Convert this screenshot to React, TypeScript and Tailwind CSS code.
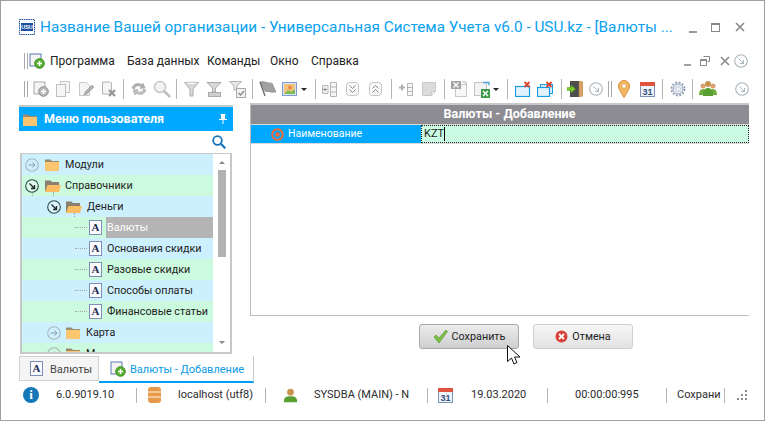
import React from 'react';

const gray = '#a9a9a9';

const Sep = ({ className = 'ml-2' }: { className?: string }) => (
  <div className={`h-[20px] w-px shrink-0 bg-[#b5b5b5] ${className}`} />
);

const Grip = () => (
  <div className="flex shrink-0 gap-[2px]">
    <div className="h-[16px] w-px bg-[#a8a8a8]" />
    <div className="h-[16px] w-px bg-[#a8a8a8]" />
  </div>
);

const NewDocIcon = ({ size = 16, muted = true }: { size?: number; muted?: boolean }) => (
  <svg width={size} height={size} viewBox="0 0 16 16" className="shrink-0">
    <rect x="1" y="1" width="11" height="12" fill="#f4f4f4" stroke={muted ? gray : '#5b78b8'} />
    <circle cx="10.5" cy="10.5" r="4.8" fill={muted ? '#b9b9b9' : '#58b030'} stroke={muted ? '#8d8d8d' : '#3a8a1c'} />
    <path d="M10.5 8v5M8 10.5h5" stroke="#fff" strokeWidth="1.5" />
  </svg>
);

const CopyIcon = () => (
  <svg width="14" height="16" viewBox="0 0 14 16" className="shrink-0">
    <rect x="4.5" y="0.5" width="9" height="11" fill="#f5f5f5" stroke="#c8c8c8" />
    <rect x="0.5" y="3.5" width="9" height="12" fill="#f5f5f5" stroke="#c0c0c0" />
  </svg>
);

const EditIcon = () => (
  <svg width="15" height="16" viewBox="0 0 15 16" className="shrink-0">
    <path d="M.5 1.5h7l3 3v10H.5z" fill="#f5f5f5" stroke="#c8c8c8" />
    <path d="M5 14l1-3 7-7 2 2-7 7z" fill="#b0b0b0" stroke="#9a9a9a" strokeWidth=".6" />
  </svg>
);

const DeleteDocIcon = () => (
  <svg width="14" height="16" viewBox="0 0 14 16" className="shrink-0">
    <path d="M.5 1h8l1 1v11H.5z" fill="#f5f5f5" stroke="#b4b4b4" />
    <path d="M7 9l6 6M13 9l-6 6" stroke="#959595" strokeWidth="2.2" />
  </svg>
);

const RefreshIcon = () => (
  <svg width="16" height="16" viewBox="0 0 16 16" className="shrink-0">
    <path d="M1 7c1-4 6-6 10-3l1-2 2 5-5 .5 1-2C7 4 4 5 3.500 8z" fill="#b0b0b0" stroke="#969696" strokeWidth=".5" />
    <path d="M15 9c-1 4-6 6-10 3l-1 2-2-5 5-.5-1 2c3 1.500 6 .5 6.500-2.500z" fill="#c0c0c0" stroke="#969696" strokeWidth=".5" />
  </svg>
);

const ZoomIcon = () => (
  <svg width="18" height="18" viewBox="0 0 18 18" className="shrink-0">
    <circle cx="7" cy="7" r="5.500" fill="#f2f2f2" stroke="#c8c8c8" strokeWidth="1.500" />
    <path d="M11 11l6 6" stroke="#bdbdbd" strokeWidth="2.500" />
  </svg>
);

const FunnelIcon = () => (
  <svg width="15" height="16" viewBox="0 0 15 16" className="shrink-0">
    <path d="M.5 1.500h14L9 8v7H6V8z" fill="#dadada" stroke="#aaa" />
    <ellipse cx="7.500" cy="2.500" rx="6" ry="1.500" fill="#f5f5f5" stroke="#b8b8b8" strokeWidth=".6" />
  </svg>
);

const FunnelBarIcon = () => (
  <svg width="16" height="17" viewBox="0 0 16 17" className="shrink-0">
    <path d="M1 1.500h14L9.500 7v4h-3V7z" fill="#d8d8d8" stroke="#aaa" />
    <rect x="2.500" y="11.500" width="12" height="4" fill="#cfcfcf" stroke="#aaa" />
  </svg>
);

const FunnelCheckIcon = () => (
  <svg width="17" height="18" viewBox="0 0 17 18" className="shrink-0">
    <path d="M.5 1.500h12L8 6v4H5V6z" fill="#e6e6e6" stroke="#b4b4b4" />
    <rect x="7.500" y="8.500" width="9" height="9" fill="#f3f3f3" stroke="#aaa" />
    <path d="M9.500 13l2 2 3.500-4" fill="none" stroke="#8c8c8c" strokeWidth="1.500" />
  </svg>
);

const FlagIcon = () => (
  <svg width="18" height="16" viewBox="0 0 18 16" className="shrink-0">
    <path d="M1 1c4-1.500 8 2 12 1l4 9c-4 1-7-1-11-.5z" fill="#a0a0a0" stroke="#888" strokeWidth=".6" />
    <path d="M1 1l5 14" stroke="#666" strokeWidth="1.300" />
  </svg>
);

const PictureIcon = () => (
  <svg width="15" height="14" viewBox="0 0 15 14" className="shrink-0">
    <rect x=".5" y=".5" width="14" height="13" fill="#dbe7f6" stroke="#7d9bd0" />
    <rect x="2" y="2" width="11" height="10" fill="#f0c27a" />
    <path d="M2 12l4-4 3 2 4-3v5z" fill="#7cbc55" />
    <circle cx="8" cy="5.500" r="2" fill="#e88c4a" />
  </svg>
);

const Caret = ({ className = 'ml-1' }: { className?: string }) => (
  <div className={`h-0 w-0 shrink-0 border-x-[3px] border-t-[3px] border-x-transparent border-t-[#222] ${className}`} />
);

const SplitIcon = () => (
  <svg width="15" height="15" viewBox="0 0 15 15" className="shrink-0">
    <path d="M8.500.5h6v14h-6zM8.500 5h6M8.500 10h6" fill="#f6f6f6" stroke="#b4b4b4" />
    <path d="M.5 3.500h5.500v8H.5z" fill="#f6f6f6" stroke="#b4b4b4" />
    <path d="M3 5.500v4M1 7.500h4" stroke="#8e8e8e" />
  </svg>
);

const ChevronsIcon = ({ up = false }: { up?: boolean }) => (
  <svg width="13" height="14" viewBox="0 0 13 14" className="shrink-0">
    <rect x=".5" y=".5" width="12" height="13" rx="3" fill="#f9f9f9" stroke="#c4c4c4" />
    <path d={up ? 'M3.500 6.500L6.500 3.500l3 3M3.500 10.500l3-3 3 3' : 'M3.500 3.500l3 3 3-3M3.500 7.500l3 3 3-3'} fill="none" stroke="#858585" />
  </svg>
);

const AddRowIcon = () => (
  <svg width="15" height="15" viewBox="0 0 15 15" className="shrink-0">
    <path d="M9.500 1.500h5v12h-5zM9.500 5.500h5M9.500 9.500h5" fill="#f6f6f6" stroke="#b4b4b4" />
    <path d="M4 2.500v6M1 5.500h6" stroke="#b0b0b0" strokeWidth="2" />
  </svg>
);

const NoteIcon = () => (
  <svg width="14" height="14" viewBox="0 0 14 14" className="shrink-0">
    <path d="M.5.500h13v9l-4 4h-9z" fill="#dcdcdc" stroke="#c8c8c8" />
    <path d="M9.500 13.500v-4h4z" fill="#f4f4f4" stroke="#c8c8c8" />
  </svg>
);

const XlsOutIcon = () => (
  <svg width="16" height="16" viewBox="0 0 16 16" className="shrink-0">
    <rect x="4.500" y="3.500" width="11" height="12" fill="#f7f7f7" stroke="#c8c8c8" />
    <rect x="0" y="0" width="10" height="8" fill="#a4a4a4" />
    <path d="M2.500 1.500l5 5M7.500 1.500l-5 5" stroke="#fff" strokeWidth="1.300" />
    <path d="M11 1h4v3" fill="none" stroke="#b4b4b4" />
  </svg>
);

const XlsInIcon = () => (
  <svg width="17" height="17" viewBox="0 0 17 17" className="shrink-0">
    <rect x=".5" y="1.500" width="12" height="13" fill="#f3f3f3" stroke="#c4c4c4" />
    <path d="M9 1.500h6v3" fill="none" stroke="#4aa2d8" strokeWidth="1.300" />
    <rect x="7" y="8" width="9" height="9" fill="#3f9a4a" />
    <path d="M9 10l5 5M14 10l-5 5" stroke="#fff" strokeWidth="1.400" />
  </svg>
);

const WinCloseIcon = ({ double = false }: { double?: boolean }) => (
  <svg width="16" height="16" viewBox="0 0 16 16" className="shrink-0">
    {double && <rect x="3.500" y="3.500" width="12" height="9" fill="#d6eefb" stroke="#169be0" />}
    <rect x=".5" y={double ? 6.500 : 5.500} width={double ? 12 : 14} height={double ? 9 : 10} fill="#e2f3fd" stroke="#169be0" strokeWidth="1.200" />
    <path d="M9.500 1l5 5M14.500 1l-5 5" stroke="#e0432e" strokeWidth="1.800" />
  </svg>
);

const DoorIcon = () => (
  <svg width="16" height="16" viewBox="0 0 16 16" className="shrink-0">
    <rect x="3" y="0" width="9" height="16" fill="#4c4c4c" />
    <path d="M12 0l4 1v14l-4 1z" fill="#d7a468" stroke="#b67f44" strokeWidth=".5" />
    <path d="M0 6.500h4V4l4.500 4L4 12V9.500H0z" fill="#7ccb2e" stroke="#4e9a16" strokeWidth=".5" />
  </svg>
);

const CircleArrow = ({ size = 14, dark = false, right = false }: { size?: number; dark?: boolean; right?: boolean }) => (
  <svg width={size} height={size} viewBox="0 0 14 14" className="shrink-0">
    <circle cx="7" cy="7" r="6.300" fill={dark ? '#fff' : 'none'} fillOpacity={dark ? 0.35 : 0} stroke={dark ? '#2a4a48' : '#a9b4bb'} strokeWidth="1.100" />
    {right ? (
      <path d="M3.500 7h6.500M7.500 4.500L10 7l-2.500 2.500" fill="none" stroke="#8b9aa6" strokeWidth="1" />
    ) : (
      <path d="M4.500 4.500l5 5M9.500 6v3.500H6" fill="none" stroke={dark ? '#1c2c2c' : '#a9b4bb'} strokeWidth={dark ? 1.400 : 1} />
    )}
  </svg>
);

const PinIcon = () => (
  <svg width="12" height="18" viewBox="0 0 12 18" className="shrink-0">
    <path d="M6 17.500C3 12 .5 9.500.5 6a5.500 5.500 0 0 1 11 0c0 3.500-2.500 6-5.500 11.500z" fill="#f2b765" stroke="#d8903c" />
    <circle cx="6" cy="6" r="2.300" fill="#fff6e6" stroke="#d8903c" strokeWidth=".6" />
  </svg>
);

const CalendarIcon = () => (
  <svg width="15" height="15" viewBox="0 0 15 15" className="shrink-0">
    <rect x=".5" y=".5" width="14" height="14" fill="#eef3fa" stroke="#7e93b4" />
    <rect x="0" y="0" width="15" height="4" fill="#e0533f" />
    <text x="7.500" y="13" textAnchor="middle" fontSize="9" fontWeight="700" fontFamily="'Liberation Sans', sans-serif" fill="#33507f">31</text>
  </svg>
);

const GearIcon = () => (
  <svg width="16" height="16" viewBox="0 0 16 16" className="shrink-0">
    <circle cx="8" cy="8" r="2.500" fill="#fff" stroke="#8a9cb4" />
    <circle cx="8" cy="8" r="5" fill="#e4e9f0" fillOpacity=".6" stroke="#8a9cb4" />
    <circle cx="8" cy="8" r="6.600" fill="none" stroke="#8a9cb4" strokeWidth="1.700" strokeDasharray="2 1.500" />
  </svg>
);

const UsersIcon = ({ size = 18, single = false }: { size?: number; single?: boolean }) => (
  <svg width={size} height={size} viewBox="0 0 18 18" className="shrink-0">
    {!single && (
      <>
        <circle cx="4" cy="6" r="2.500" fill="#e0a070" />
        <path d="M0 15c0-4 1.500-6 4-6s4 2 4 6z" fill="#6cad3e" />
        <circle cx="14" cy="6" r="2.500" fill="#e0a070" />
        <path d="M10 15c0-4 1.500-6 4-6s4 2 4 6z" fill="#6cad3e" />
      </>
    )}
    <circle cx="9" cy={single ? 5 : 4} r={single ? 4 : 3} fill="#c99350" />
    <path d={single ? 'M1 17c0-6 3-7 8-7s8 1 8 7z' : 'M4 16c0-6 2-8 5-8s5 2 5 8z'} fill="#58a032" />
  </svg>
);

const FolderIcon = ({ open = false, className = '' }: { open?: boolean; className?: string }) => (
  <svg width="16" height="13" viewBox="0 0 16 13" className={`shrink-0 ${className}`}>
    <path d="M0 1.500h5.500L7 3h7v10H0z" fill={open ? '#8b8070' : '#9a8a70'} />
    {open ? <path d="M2.500 6H16l-2 7H0z" fill="#fbbd63" /> : <rect x="0" y="4" width="14" height="9" fill="#fcc56f" />}
  </svg>
);

const LetterIcon = () => (
  <div className="flex h-[15px] w-[13px] shrink-0 items-center justify-center border border-[#7d8fb8] bg-[#fbfbff] font-['Liberation_Serif',serif] text-[11px] leading-none font-bold text-[#1d2a50]">
    A
  </div>
);

const Guide = ({ end = false }: { end?: boolean }) => (
  <div className={`w-0 shrink-0 self-stretch border-l border-dotted border-[#a0a8a8] ${end ? 'mb-[10px]' : ''}`} />
);

type Row = { label: string; bg: string; selected?: boolean };

const leaves: Row[] = [
  { label: 'Валюты', bg: 'bg-[#ccfade]', selected: true },
  { label: 'Основания скидки', bg: 'bg-[#cdf0ff]' },
  { label: 'Разовые скидки', bg: 'bg-[#ccfade]' },
  { label: 'Способы оплаты', bg: 'bg-[#cdf0ff]' },
  { label: 'Финансовые статьи', bg: 'bg-[#ccfade]' },
];

const Tree = () => (
  <div className="flex h-[201px] w-[212px] flex-col overflow-hidden border-2 border-t border-[#c8c8c8] text-[10.750px] whitespace-nowrap text-[#222]">
    <div className="flex min-h-0 flex-1">
      <div className="flex h-[300px] w-[191px] shrink-0 flex-col">
        <div className="flex h-[21px] items-center bg-[#cdf0ff]">
          <div className="ml-[3px]"><CircleArrow right /></div>
          <FolderIcon className="ml-[6px]" />
          <span className="ml-[4px] pt-[2px]">Модули</span>
        </div>
        <div className="relative flex h-[21px] items-center bg-[#ccfade]">
          <div className="absolute top-[18px] bottom-0 left-[10px] border-l border-dotted border-[#a0a8a8]" />
          <div className="absolute top-[17px] bottom-0 left-[31px] border-l border-dotted border-[#a0a8a8]" />
          <div className="ml-[3px]"><CircleArrow dark /></div>
          <FolderIcon open className="ml-[6px]" />
          <span className="ml-[4px] pt-[2px]">Справочники</span>
        </div>
        <div className="relative flex h-[21px] bg-[#cdf0ff]">
          <div className="absolute top-[17px] bottom-0 left-[52px] border-l border-dotted border-[#a0a8a8]" />
          <div className="ml-[10px]"><Guide /></div>
          <div className="ml-[14px] flex items-center"><CircleArrow dark /></div>
          <FolderIcon open className="ml-[5px] self-center" />
          <span className="ml-[5px] self-center pt-[2px]">Деньги</span>
        </div>
        {leaves.map((row, i) => (
          <div key={row.label} className={`flex h-[21px] ${row.bg}`}>
            <div className="ml-[10px]"><Guide /></div>
            <div className="ml-[20px]"><Guide /></div>
            <div className="relative ml-[20px] w-0"><Guide end={i === leaves.length - 1} /></div>
            <div className="mt-[10px] ml-px h-0 w-[12px] shrink-0 border-t border-dotted border-[#a0a8a8]" />
            <div className="ml-[2px] self-center"><LetterIcon /></div>
            <span className={`ml-[4px] flex flex-1 items-center pt-[2px] pl-px ${row.selected ? 'bg-[#b4b4b4] text-white' : ''}`}>{row.label}</span>
          </div>
        ))}
        <div className="flex h-[21px] bg-[#cdf0ff]">
          <div className="ml-[10px]"><Guide /></div>
          <div className="ml-[14px] flex items-center"><CircleArrow right /></div>
          <FolderIcon className="ml-[5px] self-center" />
          <span className="ml-[4px] self-center pt-[2px]">Карта</span>
        </div>
        <div className="h-[11px] overflow-hidden bg-[#ccfade]">
          <div className="flex h-[21px]">
            <div className="ml-[10px]"><Guide /></div>
            <div className="ml-[14px] flex items-center"><CircleArrow right /></div>
            <FolderIcon className="ml-[5px] self-center" />
            <span className="ml-[4px] self-center pt-[2px]">М</span>
          </div>
        </div>
      </div>
      <div className="flex w-[17px] shrink-0 flex-col items-center bg-white pt-[7px]">
        <div className="h-0 w-0 border-x-[3px] border-b-[3px] border-x-transparent border-b-[#888]" />
        <div className="mt-[6px] h-[87px] w-[8px] bg-[#b2b2b2]" />
        <div className="mt-auto mb-[8px] h-0 w-0 border-x-[3px] border-t-[3px] border-x-transparent border-t-[#888]" />
      </div>
    </div>
  </div>
);

const StatusText = ({ children, className = '' }: { children: React.ReactNode; className?: string }) => (
  <span className={`shrink-0 pt-px whitespace-nowrap text-[11px] text-[#2b2b2b] ${className}`}>{children}</span>
);

const MenuBar = () => (
  <div className="flex h-[24px] items-center pl-[23px] text-[12px] whitespace-nowrap text-[#222]">
    <Grip />
    <div className="ml-px"><NewDocIcon muted={false} size={16} /></div>
    <span className="ml-[5px] w-[65px]">Программа</span>
    <span className="ml-[12px] w-[68px]">База данных</span>
    <span className="ml-[12px] w-[51px]">Команды</span>
    <span className="ml-[12px] w-[29px]">Окно</span>
    <span className="ml-[12px]">Справка</span>
    <div className="ml-auto flex items-center">
      <div className="mt-[8px] h-[2px] w-[7px] bg-[#a0a0a0]" />
      <svg width="10" height="10" viewBox="0 0 10 10" className="ml-[9px]"><path d="M3.500 .5h6v5h-2M.5 3.500h6v6h-6zM.5 4.500h6" fill="none" stroke="#888" /></svg>
      <svg width="10" height="10" viewBox="0 0 10 10" className="ml-[10px]"><path d="M1 1l8 8M9 1l-8 8" stroke="#888" strokeWidth="1.600" /></svg>
    </div>
    <div className="mr-[16px] ml-[4px]"><CircleArrow /></div>
  </div>
);

const Toolbar = () => (
  <div className="mt-[4px] flex h-[24px] items-center pl-[23px]">
    <Grip />
    <div className="ml-[5px]"><NewDocIcon /></div>
    <div className="ml-[7px]"><CopyIcon /></div>
    <div className="ml-[9px]"><EditIcon /></div>
    <div className="ml-[8px]"><DeleteDocIcon /></div>
    <Sep className="ml-[7px]" />
    <div className="ml-[7px]"><RefreshIcon /></div>
    <div className="ml-[6px]"><ZoomIcon /></div>
    <Sep className="ml-[5px]" />
    <div className="ml-[7px]"><FunnelIcon /></div>
    <div className="ml-[7px]"><FunnelBarIcon /></div>
    <div className="ml-[7px]"><FunnelCheckIcon /></div>
    <Sep className="ml-[6px]" />
    <div className="ml-[6px]"><FlagIcon /></div>
    <div className="ml-[5px]"><PictureIcon /></div>
    <Caret className="ml-[4px]" />
    <Sep className="ml-[8px]" />
    <div className="ml-[6px]"><SplitIcon /></div>
    <div className="ml-[9px]"><ChevronsIcon /></div>
    <div className="ml-[10px]"><ChevronsIcon up /></div>
    <Sep className="ml-[9px]" />
    <div className="ml-[6px]"><AddRowIcon /></div>
    <div className="ml-[9px]"><NoteIcon /></div>
    <Sep className="ml-[8px]" />
    <div className="ml-[6px]"><XlsOutIcon /></div>
    <div className="ml-[7px]"><XlsInIcon /></div>
    <Caret className="ml-[2px]" />
    <Sep className="ml-[8px]" />
    <div className="ml-[7px]"><WinCloseIcon /></div>
    <div className="ml-[6px]"><WinCloseIcon double /></div>
    <Sep className="ml-[8px]" />
    <div className="ml-[5px]"><DoorIcon /></div>
    <div className="ml-[6px]"><CircleArrow /></div>
    <div className="ml-[5px]"><Grip /></div>
    <div className="ml-[6px]"><PinIcon /></div>
    <div className="ml-[10px]"><CalendarIcon /></div>
    <Sep className="ml-[7px]" />
    <div className="ml-[7px]"><GearIcon /></div>
    <Sep className="ml-[6px]" />
    <div className="ml-[6px]"><UsersIcon /></div>
    <div className="ml-[18px]"><CircleArrow /></div>
  </div>
);

const SidePanel = () => (
  <div className="mt-[2px] flex w-[214px] shrink-0 flex-col border-t-2 border-[#c8c8c8]">
    <div className="flex h-[24px] items-center bg-[#00a8ff] pr-[6px] pl-[4px] text-white">
      <FolderIcon />
      <span className="ml-[5px] text-[12.500px] font-bold">Меню пользователя</span>
      <svg width="8" height="10" viewBox="0 0 8 10" className="ml-auto"><path d="M1.500 0h5v1H6v4h2v1H4.500v4h-1V6H0V5h2V1h-.5z" fill="#fff" /></svg>
    </div>
    <div className="flex h-[22px] items-center justify-end pr-[7px]">
      <svg width="14" height="14" viewBox="0 0 14 14"><circle cx="5.500" cy="5.500" r="4.300" fill="none" stroke="#1574bb" strokeWidth="1.800" /><path d="M8.800 8.800l4.500 4.500" stroke="#1574bb" strokeWidth="2.200" /></svg>
    </div>
    <div className="pl-[1px]"><Tree /></div>
  </div>
);

const FormPanel = () => (
  <div className="ml-[17px] flex w-[499px] shrink-0 flex-col">
    <div className="h-[213px] border-b border-l border-[#bdbdbd]">
      <div className="flex h-[21px] items-center justify-center border-t-2 border-[#c8c8c8] bg-[#8c8c92] pl-[19px] text-[12.500px] font-bold text-white">Валюты - Добавление</div>
      <div className="flex h-[20px] border-y border-[#d8d8d8]">
        <div className="flex w-[170px] shrink-0 items-center bg-[#00a8ff] pl-[20px] text-[10.500px] text-white">
          <svg width="13" height="13" viewBox="0 0 13 13" className="shrink-0"><circle cx="6.500" cy="6.500" r="5.300" fill="none" stroke="#ee6b3c" strokeWidth="2" /><circle cx="6.500" cy="6.500" r="2.300" fill="#ee6b3c" /></svg>
          <span className="ml-[4px]">Наименование</span>
        </div>
        <div className="flex flex-1 items-center border border-dotted border-[#222] bg-[#ccfbe4] pl-[2px] text-[11px] text-[#222]">
          KZT
          <div className="h-[14px] w-px bg-black" />
        </div>
      </div>
    </div>
    <div className="mt-[8px] flex text-[10.800px] text-[#222]">
      <button className="ml-[169px] flex h-[25px] w-[100px] items-center justify-center rounded-[3px] border border-[#a8a8a8] bg-gradient-to-b from-[#ececec] to-[#cfcfcf]">
        <svg width="15" height="13" viewBox="0 0 15 13"><path d="M1 7l2-2 3 3 7-8 1.500 1.500L6 13z" fill="#7cc04a" stroke="#4e8f28" strokeWidth=".6" /></svg>
        <span className="ml-[4px] pt-px">Сохранить</span>
      </button>
      <button className="ml-[14px] flex h-[25px] w-[100px] items-center justify-center rounded-[3px] border border-[#cfcfcf] bg-gradient-to-b from-[#f6f6f6] to-[#e2e2e2]">
        <svg width="13" height="13" viewBox="0 0 13 13"><circle cx="6.500" cy="6.500" r="6" fill="#d9403a" /><path d="M4 4l5 5M9 4l-5 5" stroke="#fff" strokeWidth="1.800" /></svg>
        <span className="ml-[4px] pt-px">Отмена</span>
      </button>
    </div>
  </div>
);

const Tabs = () => (
  <div className="mt-[2px] ml-[18px] flex h-[27px] text-[11px] whitespace-nowrap">
    <div className="flex h-[25px] w-[80px] items-center border border-[#d0d0d0] bg-[#f5f5f5] pl-[10px] text-[#444]">
      <LetterIcon />
      <span className="ml-[7px] pt-[3px]">Валюты</span>
    </div>
    <div className="flex w-[155px] items-center border-r border-b-[2px] border-r-[#c8c8c8] border-b-[#00a0f0] pl-[11px] text-[#0a9ae8]">
      <NewDocIcon muted={false} size={16} />
      <span className="ml-[4px] pt-[3px]">Валюты - Добавление</span>
    </div>
  </div>
);

const StatusBar = () => (
  <div className="flex h-[24px] items-center pl-[22px]">
    <div className="flex h-[16px] w-[16px] shrink-0 items-center justify-center rounded-full bg-[#1478b8] font-['Liberation_Serif',serif] text-[13px] font-bold text-white">i</div>
    <StatusText className="ml-[17px] w-[60px]">6.0.9019.10</StatusText>
    <Sep className="ml-[20px] !h-[15px]" />
    <svg width="13" height="16" viewBox="0 0 13 16" className="ml-[11px] shrink-0"><rect x="0" y="0" width="13" height="16" rx="3" fill="#e89a4c" /><path d="M0 5h13M0 10h13" stroke="#fff3dc" /></svg>
    <StatusText className="ml-[17px] w-[74px]">localhost (utf8)</StatusText>
    <Sep className="ml-[13px] !h-[15px]" />
    <div className="ml-[17px]"><UsersIcon single size={15} /></div>
    <StatusText className="ml-[16px] w-[94px]">SYSDBA (MAIN) - N</StatusText>
    <Sep className="ml-[19px] !h-[15px]" />
    <div className="ml-[10px]"><CalendarIcon /></div>
    <StatusText className="ml-[18px] w-[56px]">19.03.2020</StatusText>
    <Sep className="ml-[20px] !h-[15px]" />
    <StatusText className="ml-[27px] w-[67px]">00:00:00:995</StatusText>
    <Sep className="ml-[24px] !h-[15px]" />
    <StatusText className="ml-[10px] w-[47px]">Сохрани</StatusText>
    <Sep className="!h-[15px]" />
    <svg width="12" height="12" viewBox="0 0 12 12" className="ml-[11px] shrink-0" fill="#8a8a8a">
      <rect x="9" y="1" width="2" height="2" /><rect x="5" y="5" width="2" height="2" /><rect x="9" y="5" width="2" height="2" /><rect x="1" y="9" width="2" height="2" /><rect x="5" y="9" width="2" height="2" /><rect x="9" y="9" width="2" height="2" />
    </svg>
  </div>
);

export default function App() {
  return (
    <div className="relative flex h-[421px] w-[765px] flex-col overflow-hidden border border-[#a0a0a0] bg-white font-['Roboto',sans-serif]">
      <div className="mt-[13px] flex h-[26px] items-center pl-[18px]">
        <svg width="16" height="16" viewBox="0 0 16 16" className="shrink-0">
          <rect x=".5" y=".5" width="15" height="15" fill="#fff" stroke="#1c4f9c" strokeDasharray="1.500 .7" />
          <rect x="2" y="4" width="12" height="8" fill="#1c4f9c" />
          <text x="8" y="10.300" textAnchor="middle" fontSize="5.500" fontWeight="700" fill="#fff" fontFamily="'Liberation Sans', sans-serif">USU</text>
        </svg>
        <span className="ml-[5px] w-[632px] shrink-0 whitespace-nowrap text-[15.300px] text-[#0aa2f0]">Название Вашей организации - Универсальная Система Учета v6.0 - USU.kz - [Валюты ...</span>
        <div className="mt-[9px] ml-[17px] h-[2px] w-[8px] bg-[#999]" />
        <div className="ml-[14px] h-[9px] w-[9px] border border-t-2 border-[#888]" />
        <svg width="10" height="10" viewBox="0 0 10 10" className="ml-[15px]"><path d="M1 1l8 8M9 1l-8 8" stroke="#888" strokeWidth="1.600" /></svg>
      </div>
      <div className="mt-[9px]"><MenuBar /></div>
      <Toolbar />
      <div className="mt-[2px] flex pl-[18px]">
        <SidePanel />
        <FormPanel />
      </div>
      <Tabs />
      <StatusBar />
      <svg width="17" height="22" viewBox="0 0 17 22" className="absolute top-[344px] left-[506px]">
        <path d="M.5.500v16l4-3.500 2.500 6 3-1.500-2.500-5.500h5.500z" fill="#fff" stroke="#111" />
      </svg>
    </div>
  );
}
